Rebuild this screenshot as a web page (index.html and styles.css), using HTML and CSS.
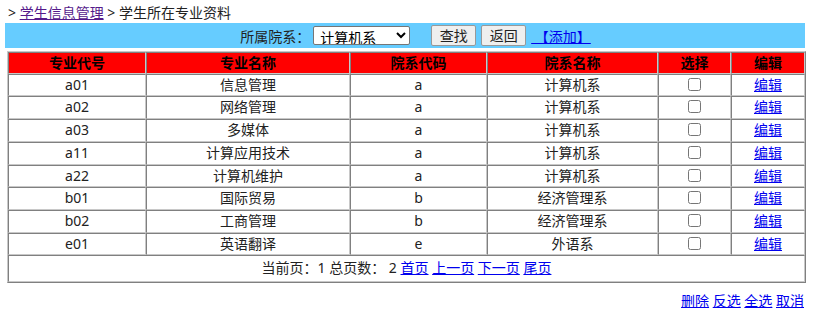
FILE: index.html
```html
<!DOCTYPE html>
<html lang="zh-CN">
<head>
    <meta charset="UTF-8">
    <title>学生所在专业资料</title>
    <link rel="stylesheet" href="styles.css">
</head>
<body>
    <div class="crumb">&gt; <a href="#" class="visited">学生信息管理</a> &gt; 学生所在专业资料</div>

    <form class="toolbar">
        <label for="dept">所属院系：</label>
        <select id="dept">
            <option>计算机系</option>
            <option>经济管理系</option>
            <option>外语系</option>
        </select>
        <button type="button">查找</button>
        <button type="button">返回</button>
        <a href="#" class="add">&nbsp;【添加】</a>
    </form>

    <table class="grid" border="1" cellspacing="0">
        <colgroup>
            <col style="width:138px">
            <col style="width:204px">
            <col style="width:137px">
            <col style="width:171px">
            <col style="width:73px">
            <col style="width:74px">
        </colgroup>
        <thead>
            <tr>
                <th>专业代号</th>
                <th>专业名称</th>
                <th>院系代码</th>
                <th>院系名称</th>
                <th>选择</th>
                <th>编辑</th>
            </tr>
        </thead>
        <tbody id="rows"></tbody>
        <tfoot>
            <tr>
                <td colspan="6" class="pager">当前页：1 总页数：&nbsp;2 <a href="#">首页</a> <a href="#">上一页</a> <a href="#">下一页</a> <a href="#">尾页</a></td>
            </tr>
        </tfoot>
    </table>

    <div class="actions">
        <a href="#">删除</a> <a href="#">反选</a> <a href="#">全选</a> <a href="#">取消</a>
    </div>

    <script>
        const majors = [
            ['a01', '信息管理', 'a', '计算机系'],
            ['a02', '网络管理', 'a', '计算机系'],
            ['a03', '多媒体', 'a', '计算机系'],
            ['a11', '计算应用技术', 'a', '计算机系'],
            ['a22', '计算机维护', 'a', '计算机系'],
            ['b01', '国际贸易', 'b', '经济管理系'],
            ['b02', '工商管理', 'b', '经济管理系'],
            ['e01', '英语翻译', 'e', '外语系']
        ];

        // Build table rows
        document.getElementById('rows').innerHTML = majors.map(m => `
            <tr>
                <td>${m[0]}</td>
                <td>${m[1]}</td>
                <td>${m[2]}</td>
                <td>${m[3]}</td>
                <td><input type="checkbox" name="sel" value="${m[0]}"></td>
                <td><a href="#">编辑</a></td>
            </tr>`).join('');
    </script>
</body>
</html>
```

FILE: styles.css
```css
body {
    margin: 0;
    font-family: "Noto Sans", "Noto Sans CJK SC", sans-serif;
    font-size: 14px;
    color: #222;
}
a {
    color: #0000ee;
}
a.visited {
    color: #551a8b;
}
.crumb {
    padding: 3px 8px 0;
    line-height: 20px;
}
.toolbar {
    margin: 0 0 3px 5px;
    width: 800px;
    height: 25px;
    background-color: #66ccff;
    display: flex;
    align-items: center;
    justify-content: center;
    padding-left: 21px;
    box-sizing: border-box;
}
.toolbar label {
    margin-right: 3px;
}
.toolbar select {
    width: 97px;
    height: 19px;
    font-family: inherit;
    font-size: 14px;
    padding: 0 2px;
    margin-right: 21px;
    border: 1px solid #767676;
    border-radius: 2px;
    background-color: #fff;
}
.toolbar button {
    height: 21px;
    width: 45px;
    padding: 0;
    font-family: inherit;
    font-size: 14px;
    line-height: 17px;
    margin-right: 5px;
    border: 1px solid #999;
    border-radius: 2px;
    background-color: #efefef;
    color: #222;
}
.grid {
    margin-left: 7px;
    width: 797px;
    table-layout: fixed;
    border-collapse: separate;
    border-spacing: 0;
    border: 1px solid;
    border-color: #c8c8c8 #808080 #808080 #c8c8c8;
}
.grid th,
.grid td {
    border: 1px solid;
    border-color: #808080 #c8c8c8 #c8c8c8 #808080;
    padding: 1px 2px;
    line-height: 18.7px;
    text-align: center;
}
.grid th {
    background-color: #ff0000;
    color: #000;
    font-weight: bold;
    padding: 1px 2px 0;
}
.grid input[type="checkbox"] {
    margin: 0;
    width: 13px;
    height: 13px;
    vertical-align: -1px;
}
.grid .pager {
    height: 23px;
}
.actions {
    width: 804px;
    margin-top: 8px;
    text-align: right;
    line-height: 20px;
}
```
